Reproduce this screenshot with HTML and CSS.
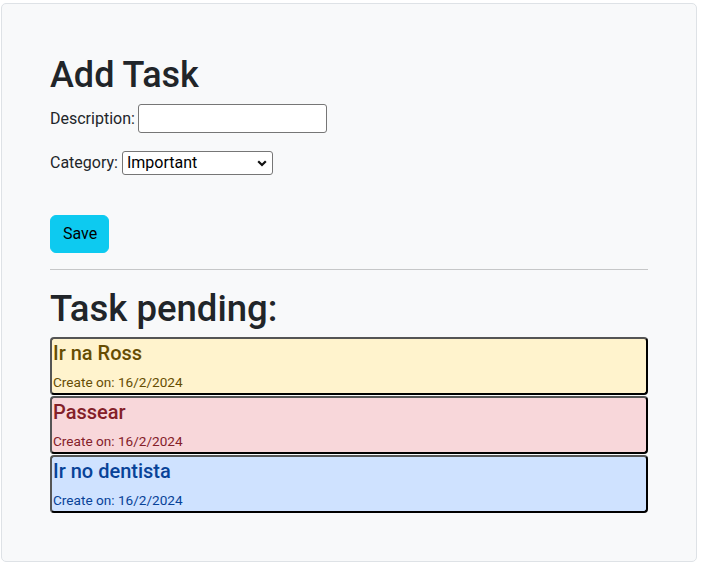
FILE: index.html
```html
<!DOCTYPE html>
<html lang="en">
<head>
<meta charset="utf-8">
<title>Tasks</title>
<link rel="stylesheet" href="styles.css">
</head>
<body>
<div class="panel">
  <h1 class="title">Add Task</h1>
  <form class="task-form">
    <div class="field field-desc">
      <label for="desc">Description:</label>
      <input id="desc" type="text" class="text-input">
    </div>
    <div class="field field-cat">
      <label for="cat">Category:</label>
      <div class="select">
        <span class="select-value">Important</span>
        <svg class="chevron" width="10" height="7" viewBox="0 0 10 7"><path d="M1.2 1.2 L5 5 L8.8 1.2" fill="none" stroke="#111" stroke-width="2.2"/></svg>
      </div>
    </div>
    <button type="button" class="btn-save">Save</button>
  </form>
  <hr class="divider">
  <h2 class="subtitle">Task pending:</h2>
  <div class="tasks">
    <div class="task task-warning">
      <h5 class="task-name">Ir na Ross</h5>
      <small class="task-date">Create on: 16/2/2024</small>
    </div>
    <div class="task task-danger">
      <h5 class="task-name">Passear</h5>
      <small class="task-date">Create on: 16/2/2024</small>
    </div>
    <div class="task task-primary">
      <h5 class="task-name">Ir no dentista</h5>
      <small class="task-date">Create on: 16/2/2024</small>
    </div>
  </div>
</div>
</body>
</html>
```
FILE: styles.css
```css
* { box-sizing: border-box; }
html, body { margin: 0; padding: 0; background: #fff; }
body {
  font-family: "Segoe UI", Roboto, "Liberation Sans", Arial, sans-serif;
  font-size: 16px;
  line-height: 1.5;
  color: #212529;
}
.panel {
  margin: 3px 6px 0 1px;
  padding: 48px;
  background: #f8f9fa;
  border: 1px solid #dee2e6;
  border-radius: 5px;
}
.title {
  margin: 0;
  font-size: 36px;
  font-weight: 500;
  line-height: 46px;
}
.task-form { margin: 6px 0 0; }
.field { display: flex; align-items: center; gap: 4px; }
.field-desc { height: 29px; gap: 3px; }
.field-cat { height: 24px; margin-top: 18px; }
.text-input {
  width: 189px;
  height: 29px;
  border: 1px solid #767676;
  border-radius: 3px;
  background: #fff;
  font: inherit;
  padding: 1px 3px;
}
.select {
  width: 151px;
  height: 24px;
  border: 1px solid #767676;
  border-radius: 3px;
  background: #fff;
  display: flex;
  align-items: center;
  justify-content: space-between;
  padding: 0 4px 0 4px;
  color: #000;
  line-height: 20px;
}
.chevron { display: block; margin-right: 1px; }
.btn-save {
  display: block;
  margin-top: 40px;
  width: 59px;
  height: 38px;
  padding: 6px 12px;
  background: #0dcaf0;
  border: 1px solid #0dcaf0;
  border-radius: 6px;
  color: #000;
  font: inherit;
  line-height: 24px;
}
.divider {
  margin: 16px 0 0;
  border: 0;
  border-top: 1px solid #c6c7c8;
  height: 0;
}
.subtitle {
  margin: 17px 0 6px;
  font-size: 36.5px;
  font-weight: 500;
  line-height: 44px;
}
.tasks { display: flex; flex-direction: column; gap: 1px; }
.task {
  height: 58px;
  border: 2px solid #000;
  border-top-color: #555;
  border-left-color: #555;
  border-radius: 4px;
  padding: 2px 0 0 1px;
}
.task-name {
  margin: 0 0 7px;
  font-size: 20px;
  font-weight: 500;
  line-height: 24px;
}
.task-date {
  display: block;
  font-size: 13.6px;
  line-height: 21px;
}
.task-warning { background: #fff3cd; color: #664d03; }
.task-danger { background: #f8d7da; color: #842029; }
.task-primary { background: #cfe2ff; color: #084298; }
```
